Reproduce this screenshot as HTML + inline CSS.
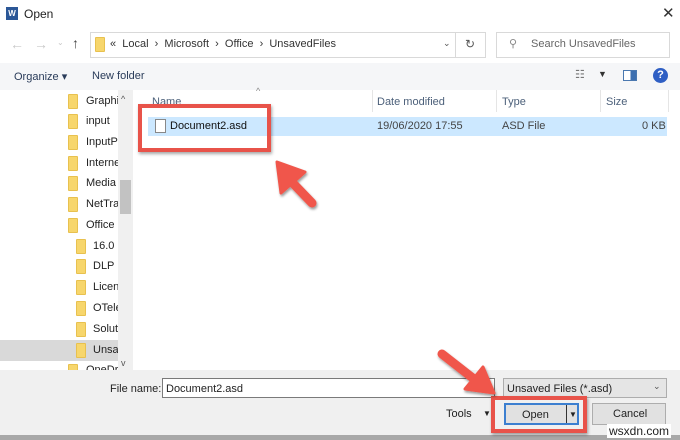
<!DOCTYPE html>
<html><head><style>
*{margin:0;padding:0;box-sizing:border-box}
body{width:680px;height:440px;overflow:hidden;background:#fff;font-family:"Liberation Sans",sans-serif;font-size:11px;color:#222;position:relative}
.a{position:absolute}
.fold{position:absolute;width:10px;height:15px;background:#f7d66c;border:1px solid #e8c14f;border-radius:1px}
.t{position:absolute;white-space:nowrap}
#nav{position:absolute;left:0;top:0;width:118px;height:370px;overflow:hidden}
</style></head><body>
<!-- title bar -->
<div class="a" style="left:6px;top:7px;width:12px;height:13px;background:#2b5797;color:#fff;font-size:8px;font-weight:bold;line-height:13px;text-align:center">W</div>
<div class="t" style="left:24px;top:7px;font-size:12px">Open</div>
<div class="t" style="left:662px;top:4px;font-size:15px;color:#333">✕</div>
<!-- address row -->
<div class="t" style="left:10px;top:36px;font-size:14px;color:#c8c8c8">←</div>
<div class="t" style="left:34px;top:36px;font-size:14px;color:#c8c8c8">→</div>
<div class="t" style="left:57px;top:38px;font-size:8px;color:#c8c8c8">⌄</div>
<div class="t" style="left:72px;top:35px;font-size:14px;color:#444">↑</div>
<div class="a" style="left:90px;top:32px;width:366px;height:26px;border:1px solid #d9d9d9"></div>
<div class="fold" style="left:95px;top:37px;width:10px;height:15px"></div>
<div class="t" style="left:110px;top:38px;font-size:11px;color:#333">«&nbsp; Local &nbsp;› &nbsp;Microsoft &nbsp;› &nbsp;Office &nbsp;› &nbsp;UnsavedFiles</div>
<div class="t" style="left:443px;top:38px;font-size:9px;color:#555">⌄</div>
<div class="a" style="left:455px;top:32px;width:31px;height:26px;border:1px solid #d9d9d9"></div>
<div class="t" style="left:465px;top:37px;font-size:12px;color:#555">↻</div>
<div class="a" style="left:496px;top:32px;width:174px;height:26px;border:1px solid #d9d9d9"></div>
<div class="t" style="left:509px;top:37px;font-size:11px;color:#888">⚲</div>
<div class="t" style="left:531px;top:38px;color:#666">Search UnsavedFiles</div>
<!-- toolbar -->
<div class="a" style="left:0;top:63px;width:680px;height:27px;background:#f5f6f8"></div>
<div class="t" style="left:14px;top:70px;color:#2a3c5a">Organize ▾</div>
<div class="t" style="left:92px;top:70px;color:#2a3c5a">New folder</div>
<div class="t" style="left:575px;top:68px;font-size:11px;color:#777">☷</div>
<div class="t" style="left:598px;top:69px;font-size:9px;color:#333">▼</div>
<div class="a" style="left:623px;top:70px;width:14px;height:11px;border:1px solid #4a78b0;background:linear-gradient(90deg,#fff 55%,#3d6fb0 55%)"></div>
<div class="a" style="left:653px;top:68px;width:15px;height:15px;border-radius:50%;background:#2f5fc4;color:#fff;font-weight:bold;font-size:11px;text-align:center;line-height:15px">?</div>
<!-- nav pane -->
<div class="a" style="left:118px;top:90px;width:15px;height:280px;background:#f0f0f0"></div>
<div class="a" style="left:120px;top:180px;width:11px;height:34px;background:#c2c2c2"></div>
<div class="t" style="left:121px;top:94px;font-size:9px;color:#555">^</div>
<div class="t" style="left:121px;top:358px;font-size:9px;color:#555">v</div>
<div id="nav">
<div class="a" style="left:0;top:340px;width:118px;height:21px;background:#d9d9d9"></div>
<div class="fold" style="left:68px;top:94px"></div><div class="t" style="left:86px;top:95px">Graphics</div>
<div class="fold" style="left:68px;top:114px"></div><div class="t" style="left:86px;top:115px">input</div>
<div class="fold" style="left:68px;top:135px"></div><div class="t" style="left:86px;top:136px">InputPers</div>
<div class="fold" style="left:68px;top:156px"></div><div class="t" style="left:86px;top:157px">Internet</div>
<div class="fold" style="left:68px;top:176px"></div><div class="t" style="left:86px;top:177px">Media Pl</div>
<div class="fold" style="left:68px;top:197px"></div><div class="t" style="left:86px;top:198px">NetTrace</div>
<div class="fold" style="left:68px;top:218px"></div><div class="t" style="left:86px;top:219px">Office</div>
<div class="fold" style="left:76px;top:239px"></div><div class="t" style="left:93px;top:240px">16.0</div>
<div class="fold" style="left:76px;top:259px"></div><div class="t" style="left:93px;top:260px">DLP</div>
<div class="fold" style="left:76px;top:280px"></div><div class="t" style="left:93px;top:281px">Licensing</div>
<div class="fold" style="left:76px;top:301px"></div><div class="t" style="left:93px;top:302px">OTele</div>
<div class="fold" style="left:76px;top:322px"></div><div class="t" style="left:93px;top:323px">Solutions</div>
<div class="fold" style="left:76px;top:343px"></div><div class="t" style="left:93px;top:344px">Unsaved</div>
<div class="fold" style="left:68px;top:364px"></div><div class="t" style="left:86px;top:364px">OneDrive</div>
</div>
<!-- file list header -->
<div class="t" style="left:152px;top:96px;color:#4c607a">Name</div>
<div class="t" style="left:256px;top:86px;font-size:9px;color:#888">^</div>
<div class="a" style="left:372px;top:90px;width:1px;height:22px;background:#e5e5e5"></div>
<div class="t" style="left:377px;top:96px;color:#4c607a">Date modified</div>
<div class="a" style="left:496px;top:90px;width:1px;height:22px;background:#e5e5e5"></div>
<div class="t" style="left:502px;top:96px;color:#4c607a">Type</div>
<div class="a" style="left:600px;top:90px;width:1px;height:22px;background:#e5e5e5"></div>
<div class="t" style="left:606px;top:96px;color:#4c607a">Size</div>
<div class="a" style="left:668px;top:90px;width:1px;height:22px;background:#e5e5e5"></div>
<div class="a" style="left:148px;top:117px;width:519px;height:19px;background:#cce8ff"></div>
<div class="a" style="left:155px;top:119px;width:11px;height:14px;background:#fff;border:1px solid #888"></div>
<div class="t" style="left:170px;top:120px;color:#111">Document2.asd</div>
<div class="t" style="left:377px;top:120px;color:#444">19/06/2020 17:55</div>
<div class="t" style="left:502px;top:120px;color:#444">ASD File</div>
<div class="t" style="left:642px;top:120px;color:#444">0 KB</div>
<!-- red box 1 -->
<div class="a" style="left:138px;top:104px;width:133px;height:48px;border:4px solid #e8534a;box-shadow:1px 2px 3px rgba(0,0,0,.35)"></div>
<!-- bottom panel -->
<div class="a" style="left:0;top:370px;width:680px;height:66px;background:#f0f0f0"></div>
<div class="a" style="left:0;top:435px;width:680px;height:5px;background:#a8a8a8"></div>
<div class="t" style="left:110px;top:383px">File name:</div>
<div class="a" style="left:162px;top:378px;width:333px;height:20px;background:#fff;border:1px solid #7a7a7a"></div>
<div class="t" style="left:166px;top:383px">Document2.asd</div>
<div class="a" style="left:503px;top:378px;width:164px;height:20px;background:#e5e5e5;border:1px solid #adadad"></div>
<div class="t" style="left:507px;top:383px">Unsaved Files (*.asd)</div>
<div class="t" style="left:653px;top:381px;font-size:9px;color:#555">⌄</div>
<div class="t" style="left:446px;top:408px">Tools</div>
<div class="t" style="left:483px;top:409px;font-size:8px">▼</div>
<div class="a" style="left:504px;top:403px;width:75px;height:22px;background:#e1e1e1;border:2px solid #3c7fd0"></div>
<div class="t" style="left:522px;top:409px">Open</div>
<div class="a" style="left:566px;top:405px;width:1px;height:18px;background:#333"></div>
<div class="t" style="left:569px;top:410px;font-size:8px">▼</div>
<div class="a" style="left:592px;top:403px;width:74px;height:22px;background:#e1e1e1;border:1px solid #adadad"></div>
<div class="t" style="left:613px;top:408px">Cancel</div>
<div class="a" style="left:491px;top:396px;width:96px;height:37px;border:4px solid #e8534a;box-shadow:1px 2px 3px rgba(0,0,0,.35)"></div>
<div class="t" style="left:607px;top:424px;font-size:12px;color:#222;background:#fff;padding:0 2px">wsxdn.com</div>
<!-- arrows -->
<svg class="a" style="left:0;top:0" width="680" height="440">
<defs><filter id="s"><feDropShadow dx="1" dy="2" stdDeviation="1.2" flood-opacity=".4"/></filter></defs>
<g filter="url(#s)" fill="#f0574b" stroke="#f0574b" stroke-linejoin="round" stroke-linecap="round">
<line x1="312" y1="203" x2="287" y2="177" stroke-width="9"/>
<polygon points="277,162 305,172 281,193" stroke-width="3"/>
<line x1="442" y1="354" x2="474" y2="379" stroke-width="9"/>
<polygon points="494,393 465,389 483,367" stroke-width="3"/>
</g></svg>
</body></html>
